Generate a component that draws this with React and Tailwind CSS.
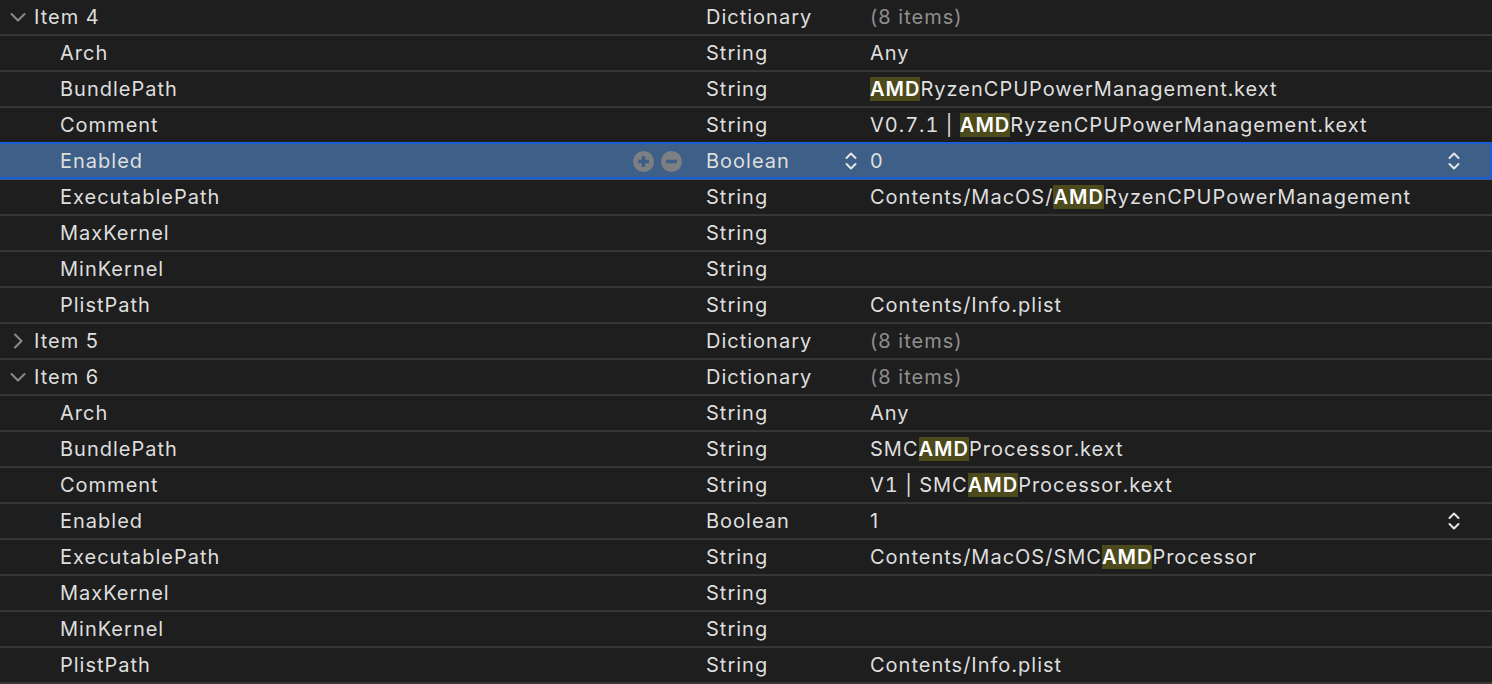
import React from 'react';

const rows = [
  { key: 'Item 4', level: 0, open: true, type: 'Dictionary', value: '(8 items)', dim: true },
  { key: 'Arch', level: 1, type: 'String', value: 'Any' },
  { key: 'BundlePath', level: 1, type: 'String', value: [['AMD', true], ['RyzenCPUPowerManagement.kext']] },
  { key: 'Comment', level: 1, type: 'String', value: [['V0.7.1 | '], ['AMD', true], ['RyzenCPUPowerManagement.kext']] },
  { key: 'Enabled', level: 1, type: 'Boolean', value: '0', selected: true, stepper: true },
  { key: 'ExecutablePath', level: 1, type: 'String', value: [['Contents/MacOS/'], ['AMD', true], ['RyzenCPUPowerManagement']] },
  { key: 'MaxKernel', level: 1, type: 'String', value: '' },
  { key: 'MinKernel', level: 1, type: 'String', value: '' },
  { key: 'PlistPath', level: 1, type: 'String', value: 'Contents/Info.plist' },
  { key: 'Item 5', level: 0, open: false, type: 'Dictionary', value: '(8 items)', dim: true },
  { key: 'Item 6', level: 0, open: true, type: 'Dictionary', value: '(8 items)', dim: true },
  { key: 'Arch', level: 1, type: 'String', value: 'Any' },
  { key: 'BundlePath', level: 1, type: 'String', value: [['SMC'], ['AMD', true], ['Processor.kext']] },
  { key: 'Comment', level: 1, type: 'String', value: [['V1 | SMC'], ['AMD', true], ['Processor.kext']] },
  { key: 'Enabled', level: 1, type: 'Boolean', value: '1', stepper: true },
  { key: 'ExecutablePath', level: 1, type: 'String', value: [['Contents/MacOS/SMC'], ['AMD', true], ['Processor']] },
  { key: 'MaxKernel', level: 1, type: 'String', value: '' },
  { key: 'MinKernel', level: 1, type: 'String', value: '' },
  { key: 'PlistPath', level: 1, type: 'String', value: 'Contents/Info.plist' },
];

function Chevron({ open }) {
  return open ? (
    <svg width="18" height="18" viewBox="0 0 18 18" className="text-[#8c8c8c]">
      <path d="M2.5 6 L9 12.5 L15.5 6" fill="none" stroke="currentColor" strokeWidth="2" strokeLinecap="round" strokeLinejoin="round" />
    </svg>
  ) : (
    <svg width="18" height="18" viewBox="0 0 18 18" className="text-[#8c8c8c]">
      <path d="M6 2.5 L12.5 9 L6 15.5" fill="none" stroke="currentColor" strokeWidth="2" strokeLinecap="round" strokeLinejoin="round" />
    </svg>
  );
}

function Stepper() {
  return (
    <svg width="14" height="22" viewBox="0 0 14 22" className="text-[#e6e6e6]">
      <path d="M2.5 8 L7 3.5 L11.5 8" fill="none" stroke="currentColor" strokeWidth="2" strokeLinecap="round" strokeLinejoin="round" />
      <path d="M2.5 14 L7 18.5 L11.5 14" fill="none" stroke="currentColor" strokeWidth="2" strokeLinecap="round" strokeLinejoin="round" />
    </svg>
  );
}

function RoundButton({ plus }) {
  return (
    <svg width="21" height="21" viewBox="0 0 21 21">
      <circle cx="10.5" cy="10.5" r="10.5" fill="#7d7f82" />
      <rect x="5" y="8.8" width="11" height="3.4" rx="0.5" fill="#3e5f88" />
      {plus && <rect x="8.8" y="5" width="3.4" height="11" rx="0.5" fill="#3e5f88" />}
    </svg>
  );
}

function Value({ value, dim }) {
  if (Array.isArray(value)) {
    return (
      <span className="whitespace-pre tabular-nums">
        {value.map(([t, hl], i) =>
          hl ? (
            <span key={i} className="bg-[#4d4a1c] text-white font-semibold">{t}</span>
          ) : (
            <span key={i}>{t}</span>
          )
        )}
      </span>
    );
  }
  return <span className={dim ? 'text-[#8f8f8f]' : ''}>{value}</span>;
}

function Row({ row }) {
  return (
    <div
      className={`relative flex items-center h-[36px] border-b-2 ${
        row.selected ? 'bg-[#3e5f88] border-[#3e5f88]' : 'border-[#363636]'
      }`}
    >
      {row.selected && (
        <div className="absolute left-0 right-0 -top-[2px] -bottom-[1px] border-y-2 border-r-2 border-[#1a5ed3] pointer-events-none" />
      )}
      <div className="w-[706px] flex items-center h-full">
        {row.level === 0 ? (
          <>
            <span className="w-[34px] flex justify-center pl-[1px]">
              <Chevron open={row.open} />
            </span>
            <span>{row.key}</span>
          </>
        ) : (
          <span className="pl-[60px]">{row.key}</span>
        )}
        {row.selected && (
          <span className="ml-auto mr-[24px] flex gap-[7px]">
            <RoundButton plus />
            <RoundButton />
          </span>
        )}
      </div>
      <div className="w-[164px] flex items-center h-full">
        <span>{row.type}</span>
        {row.selected && (
          <span className="ml-auto mr-[12px] flex">
            <Stepper />
          </span>
        )}
      </div>
      <div className="flex-1 flex items-center h-full pr-[31px]">
        <Value value={row.value} dim={row.dim} />
        {row.stepper && (
          <span className="ml-auto flex">
            <Stepper />
          </span>
        )}
      </div>
    </div>
  );
}

export default function App() {
  return (
    <div
      className="w-[1492px] h-[684px] overflow-hidden bg-[#1e1e1e] text-[#dedede] text-[20px] leading-none tracking-[1px]"
      style={{ fontFamily: 'Inter, "Noto Sans", sans-serif' }}
    >
      {rows.map((row, i) => (
        <Row key={i} row={row} />
      ))}
    </div>
  );
}
